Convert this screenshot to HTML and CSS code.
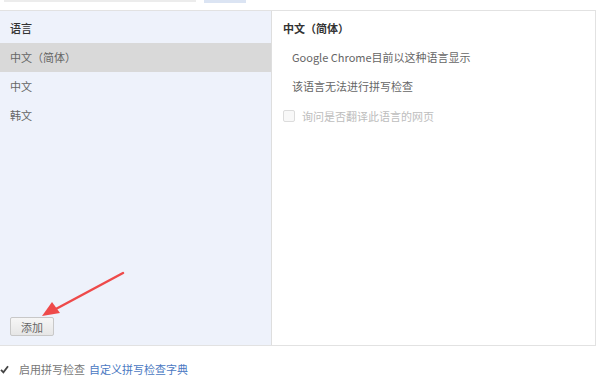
FILE: index.html
```html
<!DOCTYPE html>
<html>
<head>
<meta charset="utf-8">
<link rel="stylesheet" href="styles.css">
</head>
<body>
<div class="page">
  <div class="topstrip">
    <span class="faintbar"></span><span class="toplink"></span>
  </div>
  <div class="box">
    <div class="left">
      <div class="lhead">语言</div>
      <div class="row sel">中文（简体）</div>
      <div class="row">中文</div>
      <div class="row">韩文</div>
      <div class="spacer"></div>
      <button class="add">添加</button>
    </div>
    <div class="right">
      <div class="rhead">中文（简体）</div>
      <div class="ritem">Google Chrome目前以这种语言显示</div>
      <div class="ritem">该语言无法进行拼写检查</div>
      <div class="rcheck"><span class="cb"></span><span class="disabled">询问是否翻译此语言的网页</span></div>
    </div>
  </div>
  <div class="bottom">
    <span class="cbon"><svg width="9" height="9" viewBox="0 0 9 9"><path d="M1 4.8 L3.4 7.4 L8 1.2" fill="none" stroke="#444" stroke-width="1.8"/></svg></span>
    <span class="btxt">启用拼写检查</span>
    <span class="blink">自定义拼写检查字典</span>
  </div>
  <svg class="arrow" width="130" height="60" viewBox="0 0 130 60">
    <line x1="121" y1="3" x2="52" y2="40" stroke="#ee4a4a" stroke-width="2.5" stroke-linecap="round"/>
    <polygon points="40,46 50,32 58,43" fill="#ee4a4a"/>
  </svg>
</div>
</body>
</html>
```
FILE: styles.css
```css
html, body {
  margin: 0;
  padding: 0;
  background: #ffffff;
}
body {
  font-family: "Noto Sans CJK SC", "Open Sans", sans-serif;
  font-size: 11px;
  color: #555;
}
.page {
  position: relative;
  width: 613px;
  height: 381px;
  overflow: hidden;
}
.topstrip {
  height: 10px;
  display: flex;
  align-items: flex-start;
  gap: 8px;
  padding-left: 4px;
}
.faintbar {
  display: block;
  width: 192px;
  height: 2px;
  background: #ececec;
}
.toplink {
  display: block;
  width: 42px;
  height: 3px;
  background: #dbe4f3;
}
.box {
  display: flex;
  width: 595px;
  height: 334px;
  border: 1px solid #e2e2e2;
  border-left: none;
}
.left {
  width: 271px;
  background: #eef2fb;
  display: flex;
  flex-direction: column;
}
.lhead {
  height: 32px;
  line-height: 34px;
  padding-left: 10px;
  color: #333;
  font-weight: 500;
}
.row {
  height: 29px;
  line-height: 29px;
  padding-left: 10px;
  color: #666;
}
.row.sel {
  background: #d9d9d9;
}
.spacer {
  flex: 1;
}
.add {
  margin: 0 0 9px 10px;
  width: 44px;
  height: 19px;
  padding: 0;
  border: 1px solid #c8c8c8;
  border-radius: 2px;
  background: linear-gradient(#f6f6f6, #e6e6e6);
  font-family: "Noto Sans CJK SC", sans-serif;
  font-size: 11px;
  color: #666;
}
.right {
  flex: 1;
  border-left: 1px solid #dedede;
  background: #fff;
}
.rhead {
  height: 32px;
  line-height: 34px;
  padding-left: 11px;
  color: #333;
  font-weight: bold;
}
.ritem {
  height: 29px;
  line-height: 29px;
  padding-left: 20px;
  color: #666;
}
.rcheck {
  height: 29px;
  display: flex;
  align-items: center;
  padding-left: 11px;
  gap: 7px;
}
.cb {
  width: 10px;
  height: 10px;
  border: 1px solid #dcdcdc;
  border-radius: 2px;
  background: #f8f8f8;
}
.disabled {
  color: #bdbdbd;
}
.bottom {
  display: flex;
  align-items: center;
  height: 14px;
  margin-top: 16px;
}
.cbon {
  width: 9px;
  height: 9px;
  margin-right: 10px;
  display: flex;
}
.btxt {
  color: #777;
  margin-right: 4px;
}
.blink {
  color: #4a78c2;
}
.arrow {
  position: absolute;
  left: 2px;
  top: 270px;
}
```
